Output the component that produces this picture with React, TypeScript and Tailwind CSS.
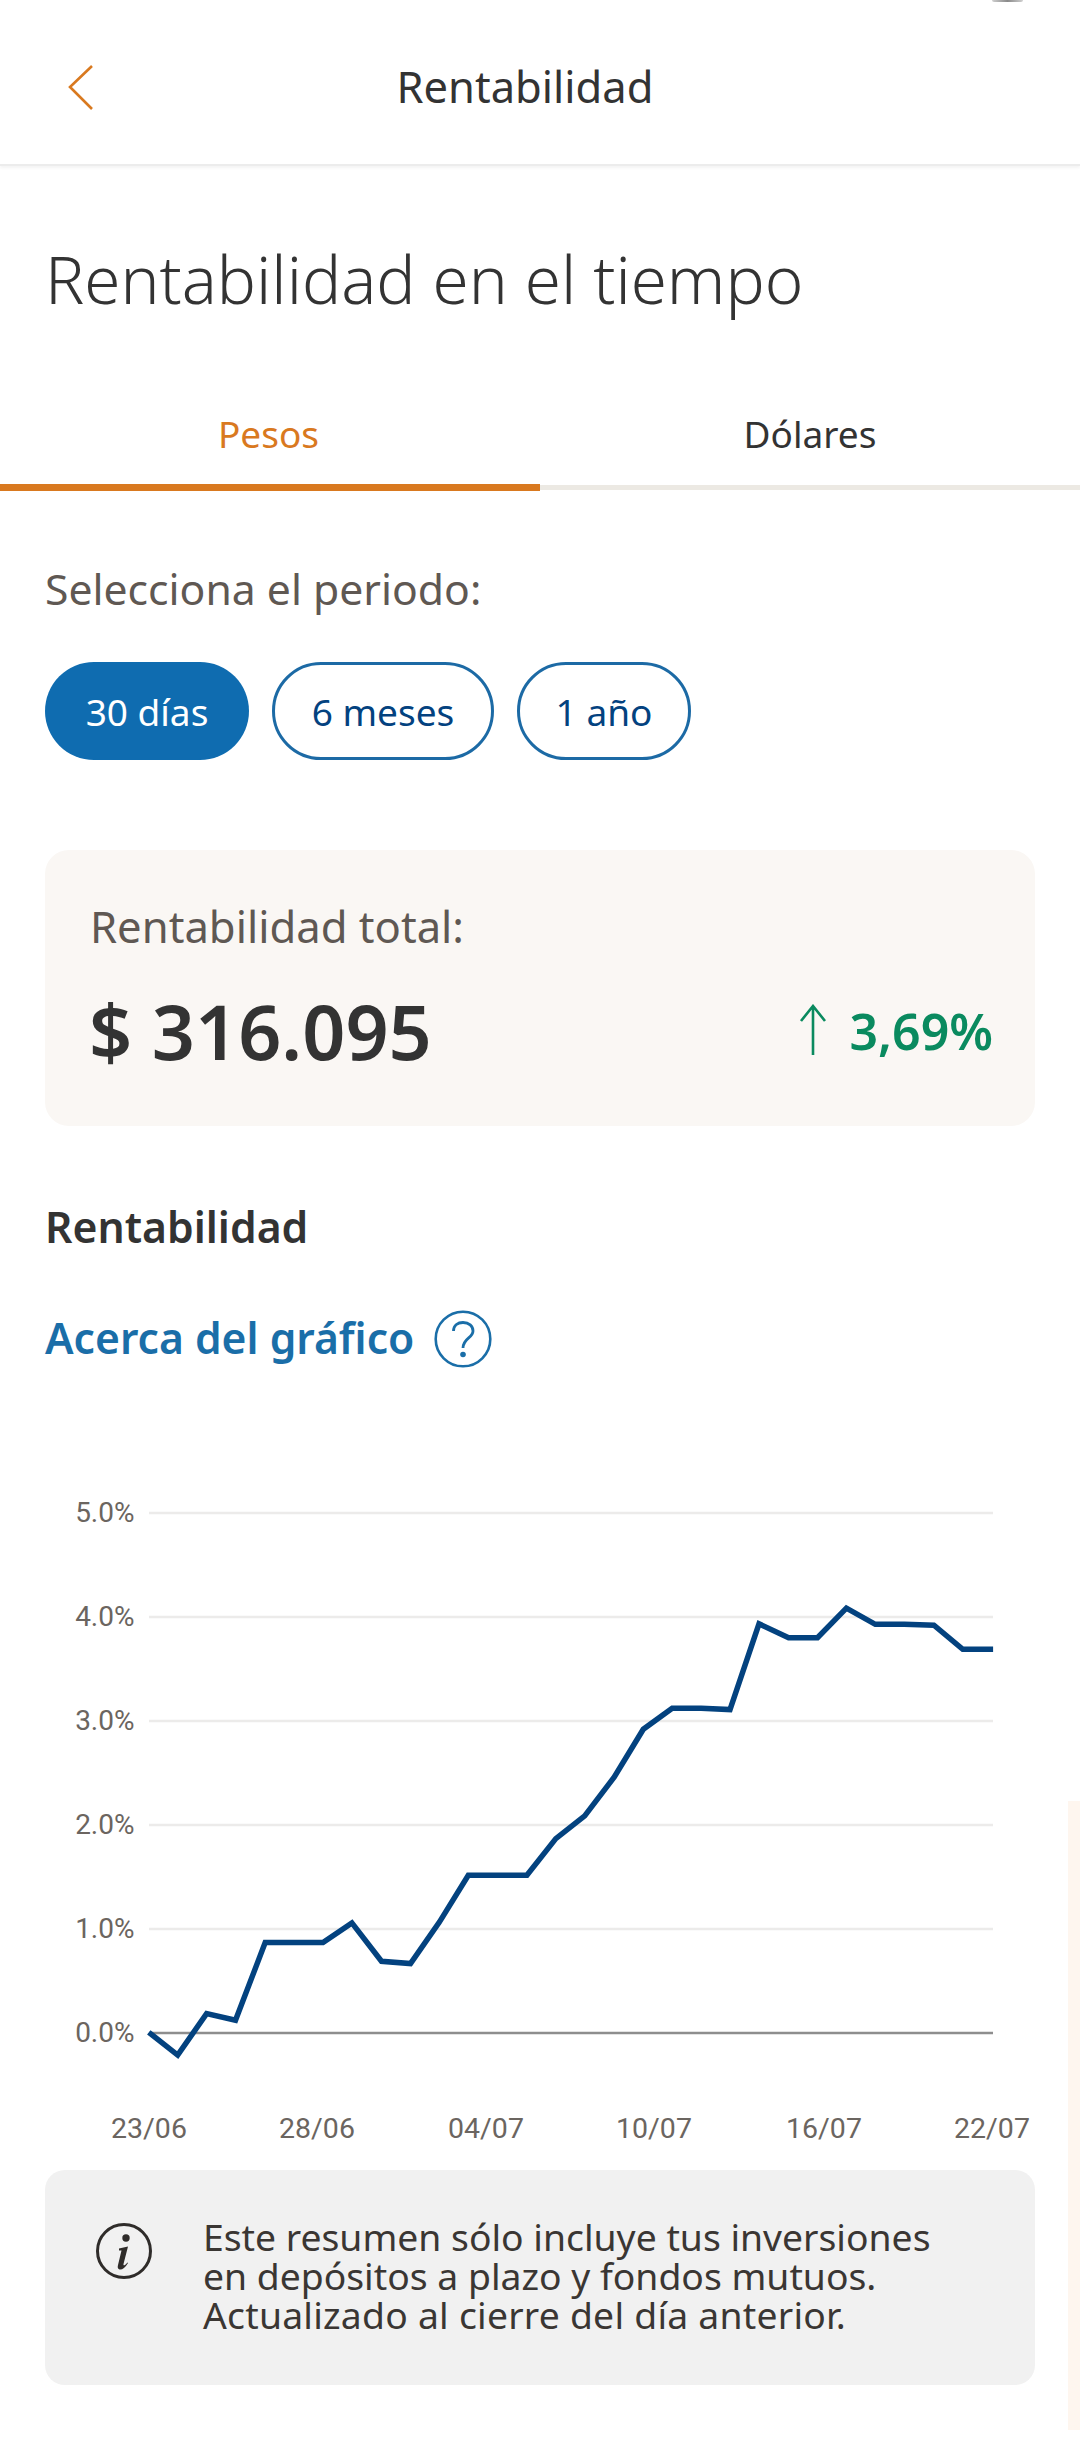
const F = "font-['Noto_Sans',sans-serif]";
const pts = [[216,1282],[258,1333],[300,1240],[342,1255],[385,1081],[427,1081],[469,1081],[511,1037],[554,1123],[596,1128],[638,1035],[680,930],[722,930],[765,930],[807,848],[849,797],[892,710],[934,603],[976,556],[1018,556],[1060,559],[1102,367],[1145,398],[1187,398],[1229,332],[1271,368],[1313,368],[1356,370],[1398,424],[1442,424]];
const linePts = pts.map(([x, y]) => `${(x / 1.452).toFixed(1)},${(y / 2.24 - 30).toFixed(1)}`).join(" ");
const yLabels = ["5.0%", "4.0%", "3.0%", "2.0%", "1.0%", "0.0%"];
const xLabels: [string, number][] = [["23/06", 149], ["28/06", 317], ["04/07", 486], ["10/07", 654], ["16/07", 824], ["22/07", 992]];

function Chart() {
  return (
    <div className="mt-[125px] h-[680px]">
      <svg width="1080" height="680" viewBox="0 0 1080 680" className="block font-['Roboto',sans-serif]">
        {[0, 1, 2, 3, 4].map((i) => (
          <line key={i} x1="149" x2="993" y1={23 + i * 104} y2={23 + i * 104} stroke="#ecebea" strokeWidth="2.5" />
        ))}
        <line x1="149" x2="993" y1="543" y2="543" stroke="#8e8e8e" strokeWidth="2.5" />
        {yLabels.map((t, i) => (
          <text key={t} x="134.5" y={23 + i * 104 + 9} textAnchor="end" fontSize="28" fill="#6b6560">{t}</text>
        ))}
        {xLabels.map(([t, x]) => (
          <text key={t} x={x} y="647.5" textAnchor="middle" fontSize="28.5" fill="#6b6560">{t}</text>
        ))}
        <polyline points={linePts} fill="none" stroke="#03427f" strokeWidth="5.5" strokeLinejoin="miter" />
      </svg>
    </div>
  );
}

export default function App() {
  return (
    <div className={`relative w-[1080px] h-[2458px] bg-white overflow-hidden ${F}`}>
      <div className="absolute left-[992px] top-0 w-[31px] h-[2px] rounded-b bg-[linear-gradient(90deg,#cfcfcf,#8a8a8a,#cfcfcf)]" />
      <div className="absolute left-[1068px] top-[1801px] w-[12px] h-[629px] bg-[#fef6ef]" />
      <header className="relative h-[166px] border-b-2 border-[#ececec] shadow-[0_2px_3px_rgba(0,0,0,0.05)] flex items-center justify-center pt-[7px] pr-[30px]">
        <svg className="absolute left-[68px] top-[64px]" width="26" height="46" viewBox="0 0 26 46" fill="none">
          <path d="M24 2 L2 23 L24 45" stroke="#d9791f" strokeWidth="2.6" />
        </svg>
        <span className="text-[43.5px] leading-[54px] text-[#333]">Rentabilidad</span>
      </header>
      <h1 className="pl-[45px] pt-[71px] text-[65.5px] leading-[84px] font-light text-[#333]">Rentabilidad en el tiempo</h1>
      <div className="flex items-start mt-[90px]">
        <div className="w-1/2 h-[80px] pr-[3px] text-center text-[37px] leading-[46px] text-[#d9791f] border-b-[7px] border-[#d9791f]">Pesos</div>
        <div className="w-1/2 h-[79px] text-center text-[37px] leading-[46px] text-[#333] border-b-[5px] border-[#ece9e3]">Dólares</div>
      </div>
      <div className="px-[45px]">
        <p className="mt-[70px] text-[42.7px] leading-[56px] text-[#5f5853]">Selecciona el periodo:</p>
        <div className="flex gap-[23px] mt-[45px]">
          <div className="h-[98px] w-[204px] pt-[2px] rounded-[49px] bg-[#0f6cb0] text-white flex items-center justify-center text-[37px]">30 días</div>
          <div className="h-[98px] w-[222px] pt-[2px] rounded-[49px] border-[3px] border-[#1c6aa5] text-[#03427f] flex items-center justify-center text-[37px]">6 meses</div>
          <div className="h-[98px] w-[174px] pt-[2px] rounded-[49px] border-[3px] border-[#1c6aa5] text-[#03427f] flex items-center justify-center text-[37px]">1 año</div>
        </div>
        <div className="mt-[90px] h-[276px] rounded-[24px] bg-[#faf7f4] pl-[44px] pr-[42px] pt-[48px]">
          <p className="ml-[1px] text-[43.6px] leading-[56px] text-[#5f5853]">Rentabilidad total:</p>
          <div className="flex items-center justify-between mt-[29px]">
            <span className="text-[75.5px] leading-[96px] font-semibold text-[#333]">$ 316.095</span>
            <span className="flex items-center gap-[23px]">
              <svg width="28" height="52" viewBox="0 0 28 52" fill="none" className="-mt-[2px]">
                <path d="M14 51 V2 M2 17 L14 2 L26 17" stroke="#0a8a5f" strokeWidth="2.6" />
              </svg>
              <span className="text-[50px] leading-[60px] font-semibold text-[#0a8a5f]">3,69%</span>
            </span>
          </div>
        </div>
        <p className="mt-[73px] text-[42.7px] leading-[56px] font-semibold text-[#333]">Rentabilidad</p>
        <div className="flex items-start gap-[20px] mt-[54px] h-[56px]">
          <span className="text-[42.6px] leading-[56px] font-semibold text-[#1a6ea8]">Acerca del gráfico</span>
          <svg width="58" height="58" viewBox="0 0 58 58" fill="none" className="mt-[1px] shrink-0">
            <circle cx="29" cy="29" r="27.3" stroke="#1a6ea8" strokeWidth="2.6" />
            <path d="M19.5 21 C19.5 15 24 12.5 29 12.5 C35 12.5 39 16 39 21 C39 28 29 28 29 38" stroke="#1a6ea8" strokeWidth="2.8" />
            <circle cx="29" cy="44.5" r="2.8" fill="#1a6ea8" />
          </svg>
        </div>
      </div>
      <Chart />
      <div className="mx-[45px] h-[215px] rounded-[20px] bg-[#f1f1f1] pl-[51px] pt-[47px] flex items-start gap-[51px]">
        <svg width="56" height="56" viewBox="0 0 56 56" fill="none" className="mt-[6px] shrink-0">
          <circle cx="28" cy="28" r="26.5" stroke="#2f2c2a" strokeWidth="3" />
          <circle cx="30" cy="15" r="3.7" fill="#2f2c2a" />
          <path d="M23 25.5 L32 23.5 L27.5 41 C27.2 43 28.5 43 31.5 39.5 L32 40 C29 45 26 47 23.5 46.5 C21.5 46 21.5 44 22 42 L25.5 27.5 L23 27.5 Z" fill="#2f2c2a" />
        </svg>
        <div className="text-[37.3px] leading-[39px] text-[#3a3633] whitespace-nowrap">
          <p>Este resumen sólo incluye tus inversiones</p>
          <p>en depósitos a plazo y fondos mutuos.</p>
          <p className="tracking-[0.24px]">Actualizado al cierre del día anterior.</p>
        </div>
      </div>
    </div>
  );
}
